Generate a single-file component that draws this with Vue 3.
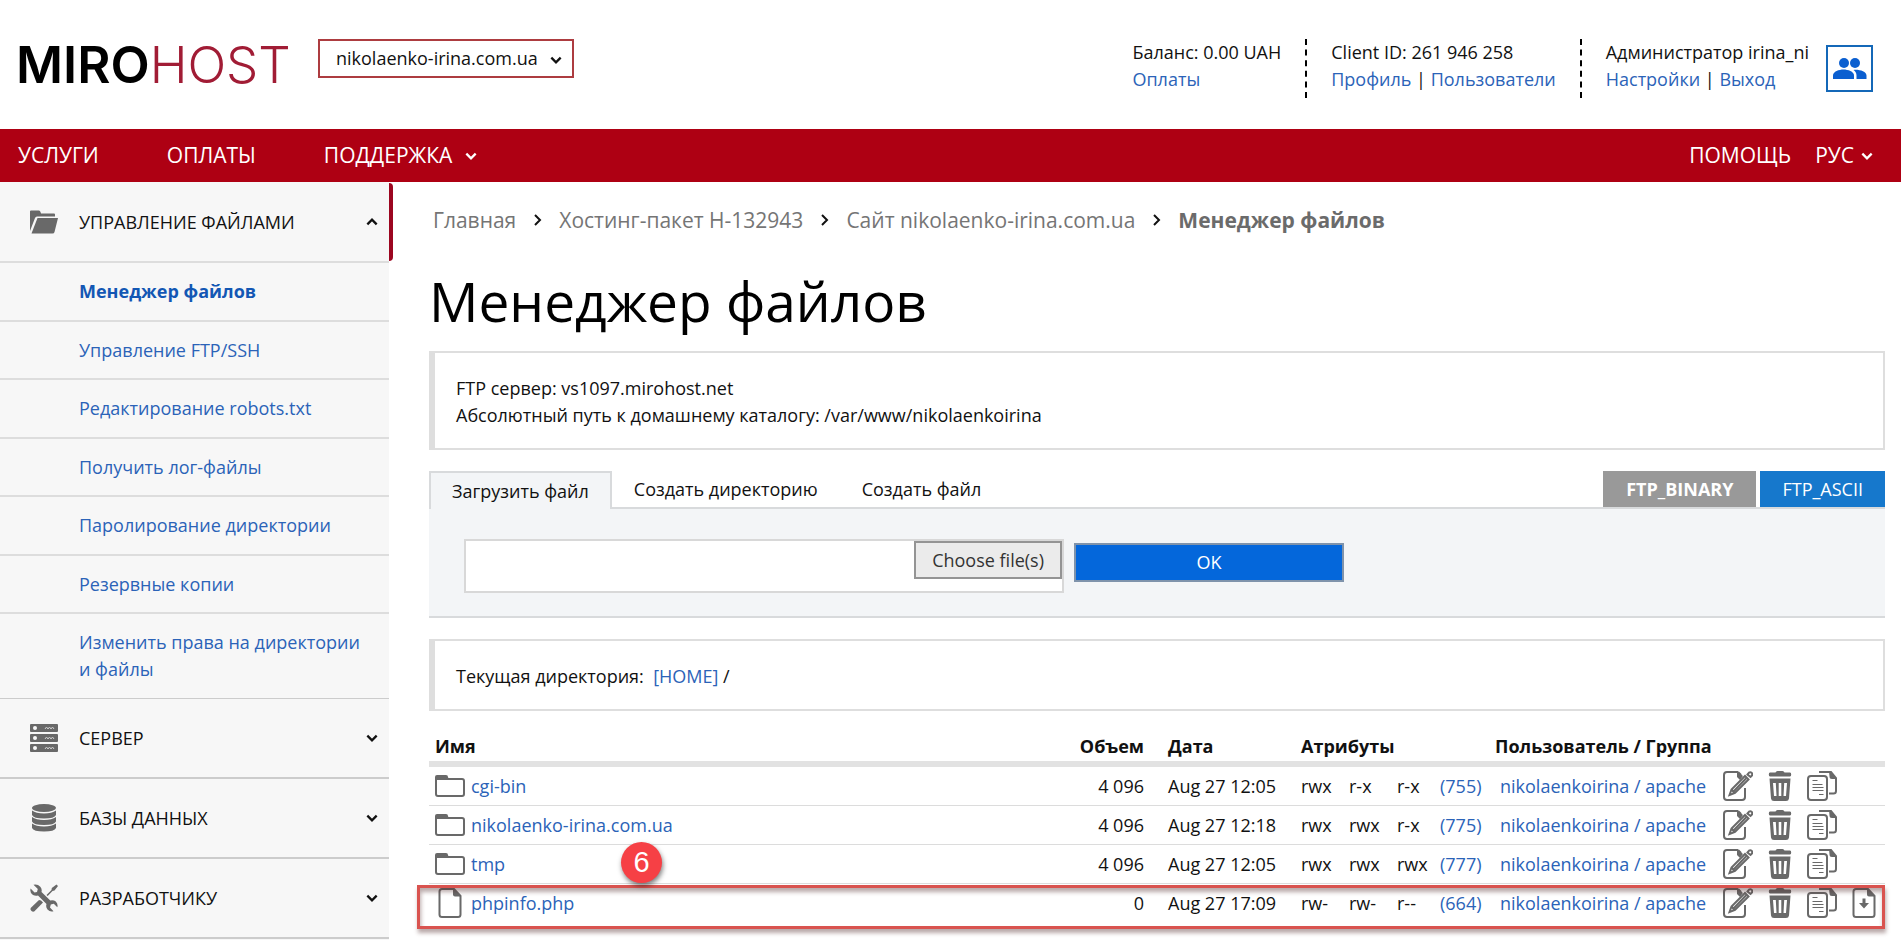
<script setup>
import { ref } from 'vue'

const site = ref('nikolaenko-irina.com.ua')
const filePath = ref('')
const activeTab = ref(0)
const tabs = ['Загрузить файл', 'Создать директорию', 'Создать файл']

const fileLinks = [
  'Менеджер файлов',
  'Управление FTP/SSH',
  'Редактирование robots.txt',
  'Получить лог-файлы',
  'Паролирование директории',
  'Резервные копии',
  'Изменить права на директории и файлы',
]

const sections = [
  { id: 'server', title: 'СЕРВЕР' },
  { id: 'db', title: 'БАЗЫ ДАННЫХ' },
  { id: 'dev', title: 'РАЗРАБОТЧИКУ' },
]

const crumbs = ['Главная', 'Хостинг-пакет H-132943', 'Сайт nikolaenko-irina.com.ua']

const rows = [
  { name: 'cgi-bin', dir: true, size: '4 096', date: 'Aug 27 12:05', perm: ['rwx', 'r-x', 'r-x'], mode: '(755)' },
  { name: 'nikolaenko-irina.com.ua', dir: true, size: '4 096', date: 'Aug 27 12:18', perm: ['rwx', 'rwx', 'r-x'], mode: '(775)' },
  { name: 'tmp', dir: true, size: '4 096', date: 'Aug 27 12:05', perm: ['rwx', 'rwx', 'rwx'], mode: '(777)' },
  { name: 'phpinfo.php', dir: false, size: '0', date: 'Aug 27 17:09', perm: ['rw-', 'rw-', 'r--'], mode: '(664)' },
]
</script>

<template>
  <div class="page">
    <header class="top">
      <a class="logo" href="#" aria-label="MIROHOST"><span class="miro">MIRO</span><span class="host">HOST</span></a>
      <div class="site">
        <select v-model="site" aria-label="Сайт">
          <option>nikolaenko-irina.com.ua</option>
        </select>
        <svg class="chev" viewBox="0 0 12 12"><path d="M2 4l4 4 4-4" /></svg>
      </div>
      <div class="account">
        <div class="cell">
          <div>Баланс: 0.00 UAH</div>
          <div><a href="#">Оплаты</a></div>
        </div>
        <div class="cell">
          <div>Client ID: 261 946 258</div>
          <div><a href="#">Профиль</a> | <a href="#">Пользователи</a></div>
        </div>
        <div class="cell">
          <div>Администратор irina_ni</div>
          <div><a href="#">Настройки</a> | <a href="#">Выход</a></div>
        </div>
        <button class="users" type="button" aria-label="Пользователи">
          <svg viewBox="0 0 34 22">
            <circle cx="11" cy="5" r="5" />
            <circle cx="22" cy="5" r="5" />
            <path d="M0 21v-3.500C0 13.500 6 11.500 10.500 11.500S21 13.500 21 17.500V21z" />
            <path d="M23.500 21v-3.500c0-2.500-1.200-4.300-3-5.500C26 11.300 33.500 13.500 33.500 17.500V21z" />
          </svg>
        </button>
      </div>
    </header>

    <nav class="nav">
      <a href="#">УСЛУГИ</a>
      <a href="#">ОПЛАТЫ</a>
      <a href="#" class="support">ПОДДЕРЖКА <svg class="chev" viewBox="0 0 12 12"><path d="M2 4l4 4 4-4" /></svg></a>
      <a href="#" class="help">ПОМОЩЬ</a>
      <a href="#" class="lang">РУС <svg class="chev" viewBox="0 0 12 12"><path d="M2 4l4 4 4-4" /></svg></a>
    </nav>

    <div class="body">
      <aside class="side">
        <button class="group open" type="button" aria-expanded="true">
          <svg class="gicon" viewBox="0 0 28 28">
            <path d="M0 23V3.500q0-1 1-1h8q1 0 1.500 1.500L11 5.500h13q1 0 1 1v2H7q-1.500 0-2 1.500z" />
            <path d="M7.500 10H28L24.500 24q-.4 1.500-2 1.500H1.500z" />
          </svg>
          <span>УПРАВЛЕНИЕ ФАЙЛАМИ</span>
          <svg class="chev" viewBox="0 0 12 12"><path d="M2 8l4-4 4 4" /></svg>
        </button>
        <ul class="sub">
          <li v-for="(l, i) in fileLinks" :key="l"><a href="#" :class="{ current: i === 0 }">{{ l }}</a></li>
        </ul>
        <button v-for="s in sections" :key="s.id" class="group" type="button" aria-expanded="false">
          <svg v-if="s.id === 'server'" class="gicon" viewBox="0 0 28 28">
            <g v-for="y in [0, 10, 20]" :key="y">
              <rect x="0" :y="y" width="28" height="8" rx="1" />
              <circle cx="5" :cy="y + 4" r="2" fill="#f7f7f7" />
              <path :d="`M15 ${y + 5}l1.500-2 1.500 2 1.500-2 1.500 2 1.500-2 1.500 2`" fill="none" stroke="#d0d0d0" />
            </g>
          </svg>
          <svg v-else-if="s.id === 'db'" class="gicon" viewBox="0 0 28 28">
            <ellipse cx="14" cy="4" rx="12" ry="4" />
            <path v-for="y in [0, 6.500, 13]" :key="y" :d="`M2 ${y + 6.500}q4 3 12 3t12-3v4.500q-1.500 3.500-12 3.500t-12-3.500z`" />
          </svg>
          <svg v-else class="gicon" viewBox="0 0 28 28">
            <path d="M3.500 .8L7.800 5 7 8 4.500 8.500 .6 4.500Q-.5 9 3 11q2.500 1.300 5 .5l8.500 8.500q-1 3 1 5.500 2.500 2.700 6 1.700L20 23.500l.8-3 3-.8 3.500 3.600q1-3.300-1.500-5.800-2.500-2-5.500-1L11.500 8q.8-3-1.200-5.200Q7.500-.2 3.500.8z" />
            <path d="M11 16.500l2 2L4.500 27.300q-1.500 1-3-.3-1.700-1.600-.6-3.200L9 16z" />
            <path d="M16.500 11l5-5 .3-2L26.500 .5 28 2l-3.500 4.500-2 .5-4.800 5z" />
          </svg>
          <span>{{ s.title }}</span>
          <svg class="chev" viewBox="0 0 12 12"><path d="M2 4l4 4 4-4" /></svg>
        </button>
      </aside>

      <main class="main">
        <div class="crumbs">
          <template v-for="c in crumbs" :key="c">
            <a href="#">{{ c }}</a>
            <svg viewBox="0 0 12 16"><path d="M3 3l5 5-5 5" /></svg>
          </template>
          <strong>Менеджер файлов</strong>
        </div>
        <h1>Менеджер файлов</h1>

        <section class="box">
          <div>FTP сервер: vs1097.mirohost.net</div>
          <div>Абсолютный путь к домашнему каталогу: /var/www/nikolaenkoirina</div>
        </section>

        <div class="tabs">
          <button v-for="(t, i) in tabs" :key="t" type="button" class="tab" :class="{ active: i === activeTab }" @click="activeTab = i">{{ t }}</button>
          <div class="modes">
            <button type="button" class="mode selected">FTP_BINARY</button>
            <button type="button" class="mode">FTP_ASCII</button>
          </div>
        </div>
        <form class="panel" @submit.prevent>
          <div class="file">
            <input v-model="filePath" type="text" aria-label="Файл" />
            <button type="button">Choose file(s)</button>
          </div>
          <button class="ok" type="submit">OK</button>
        </form>

        <section class="box dir">Текущая директория: &nbsp;<a href="#">[HOME]</a> /</section>

        <div class="listing">
          <table>
            <colgroup>
              <col />
              <col class="c-size" />
              <col class="c-date" />
              <col class="c-perm" />
              <col class="c-perm" />
              <col class="c-last" />
              <col class="c-mode" />
              <col class="c-user" />
              <col class="c-act" />
            </colgroup>
            <thead>
              <tr>
                <th class="name">Имя</th>
                <th class="size">Объем</th>
                <th>Дата</th>
                <th colspan="4">Атрибуты</th>
                <th>Пользователь / Группа</th>
                <th></th>
              </tr>
            </thead>
            <tbody>
              <tr v-for="r in rows" :key="r.name">
                <td class="name">
                  <a href="#">
                    <svg v-if="r.dir" class="ic" viewBox="0 0 30 30">
                      <path class="s" d="M1 9v14q0 2 2 2h24q2 0 2-2V10q0-2-2-2H1z" />
                      <path d="M0 9V6q0-2 2-2h9q2 0 2 2l1 3z" />
                    </svg>
                    <svg v-else class="ic" viewBox="0 0 30 30">
                      <path class="s" d="M19 1H7Q4.500 1 4.500 3.500v23Q4.500 29 7 29h16q2.500 0 2.500-2.500V8z" />
                      <path d="M18 0l8 8.500h-6q-2 0-2-2z" />
                    </svg>
                    {{ r.name }}
                  </a>
                </td>
                <td class="size">{{ r.size }}</td>
                <td>{{ r.date }}</td>
                <td v-for="(p, i) in r.perm" :key="i">{{ p }}</td>
                <td><a href="#">{{ r.mode }}</a></td>
                <td class="user"><a href="#">nikolaenkoirina</a><a href="#"> / apache</a></td>
                <td>
                  <div class="acts">
                    <a href="#" aria-label="Редактировать">
                      <svg class="ic" viewBox="0 0 30 30">
                        <path class="s" d="M15 1H4Q1 1 1 4v22q0 3 3 3h15q3 0 3-3v-9M15 1l3 3" />
                        <path d="M14 0l6 5-3 4-3-3z" />
                        <path class="s" d="M6.500 24l2-5.500L22 5l3.500 3.500L12 22zM9 19l2.500 3M10.500 20.500L23 7.500" />
                        <path class="s" d="M24.500 3.500l1.500-1.800q1.500-1 2.700.2t.2 2.600L27.500 6z" />
                      </svg>
                    </a>
                    <a href="#" aria-label="Удалить">
                      <svg class="ic" viewBox="0 0 30 30">
                        <path d="M5 1.500h5.500Q11 0 12.500 0h5q1.500 0 2 1.500H25q1.200 0 1.200 2T25 5.500H5Q3.800 5.500 3.800 3.500T5 1.500z" />
                        <path fill-rule="evenodd" d="M4.500 7.500h21L24 27.500q-.3 2.500-3 2.500H9q-2.700 0-3-2.500zM8 12l1 13h2.500L10.800 12zM13.700 12v13h2.600V12zM19.200 12l-.7 13H21l1-13z" />
                      </svg>
                    </a>
                    <a href="#" aria-label="Копировать">
                      <svg class="ic" viewBox="0 0 30 30">
                        <path class="s" d="M4 5h13q3 0 3 3v18q0 3-3 3H4q-3 0-3-3V8q0-3 3-3zM12 1h12l5 6v13q0 2.500-2.500 2.500H22" />
                        <path d="M22 0l8 8h-5q-2.500 0-2.500-2.500z" />
                        <path class="t" d="M5.500 9.500h5M5.500 13.500h10M5.500 16.500h11M5.500 19.500h11M12 23.500h4.500" />
                      </svg>
                    </a>
                    <a v-if="!r.dir" href="#" aria-label="Скачать">
                      <svg class="ic" viewBox="0 0 30 30">
                        <path class="s" d="M19 1H7Q4.500 1 4.500 3.500v23Q4.500 29 7 29h16q2.500 0 2.500-2.500V8z" />
                        <path d="M18 0l8 8.500h-6q-2 0-2-2zM13.500 10.500h3V15H20l-5 5.500L10 15h3.500z" />
                      </svg>
                    </a>
                  </div>
                </td>
              </tr>
            </tbody>
          </table>
          <div class="marker"></div>
          <div class="step">6</div>
        </div>
      </main>
    </div>
  </div>
</template>

<style>
body {
  margin: 0;
  background: #fff;
}
</style>

<style scoped>
* {
  box-sizing: border-box;
}
.page {
  min-height: 100vh;
  display: flex;
  flex-direction: column;
  font-family: "Open Sans", "Noto Sans", sans-serif;
  font-size: 18px;
  line-height: 27px;
  color: #111;
}
button,
select,
input {
  font: inherit;
  color: inherit;
  margin: 0;
  border-radius: 0;
}
a {
  color: #2b63b8;
  text-decoration: none;
}
.chev {
  width: 14px;
  height: 14px;
  flex: none;
}
.chev path,
.crumbs path {
  fill: none;
  stroke: currentColor;
  stroke-width: 2;
}

/* top bar */
.top {
  display: flex;
  align-items: flex-start;
  height: 129px;
  padding: 39px 28px 0 16px;
}
.logo {
  width: 302px;
  height: 52px;
  font-family: Inter, sans-serif;
  font-size: 51px;
  line-height: 52px;
  white-space: nowrap;
}
.miro {
  color: #000;
  font-weight: 600;
}
.host {
  color: #a11c35;
  font-weight: 300;
}
.site {
  position: relative;
}
.site select {
  width: 256px;
  height: 39px;
  padding: 0 34px 0 16px;
  border: 2px solid #ad3c40;
  background: #fff;
  appearance: none;
}
.site .chev {
  position: absolute;
  right: 11px;
  top: 14px;
  pointer-events: none;
}
.account {
  display: flex;
  margin-left: auto;
  white-space: nowrap;
}
.cell {
  height: 59px;
  padding: 0 24px;
  border-left: 2px dashed #000;
}
.cell:first-child {
  border-left: 0;
}
.cell:nth-child(3) {
  padding-right: 17px;
}
.users {
  width: 47px;
  height: 47px;
  margin-top: 6px;
  padding: 0;
  display: grid;
  place-items: center;
  border: 2px solid #1468b8;
  background: #fff;
}
.users svg {
  width: 34px;
  height: 22px;
  fill: #0b5fd0;
}

/* main navigation */
.nav {
  display: flex;
  align-items: center;
  height: 53px;
  padding: 0 27px 0 18px;
  background: #ae0013;
  font-size: 21px;
}
.nav a {
  display: flex;
  align-items: center;
  margin-right: 68px;
  color: #fff;
}
.nav .chev {
  margin-left: 12px;
}
.nav .help {
  margin: 0 24px 0 auto;
}
.nav .lang {
  margin: 0;
}
.nav .lang .chev {
  margin-left: 6px;
}

.body {
  display: flex;
  flex: 1;
}

/* sidebar */
.side {
  flex: none;
  width: 389px;
  padding-top: 1px;
  background: #f7f7f7;
}
.group {
  position: relative;
  display: flex;
  align-items: center;
  width: 100%;
  height: 80px;
  padding: 0 10px 0 30px;
  border: 0;
  border-bottom: 2px solid #ccc;
  background: none;
  text-align: left;
}
.group.open {
  height: 80px;
  border-bottom-color: #ddd;
}
.group.open::after {
  content: "";
  position: absolute;
  left: 100%;
  top: 0;
  width: 4px;
  height: 78px;
  border-radius: 0 4px 4px 0;
  background: #9c0620;
}
.group span {
  flex: 1;
}
.gicon {
  width: 28px;
  height: 28px;
  margin-right: 21px;
  fill: #696969;
}
.sub {
  margin: 0;
  padding: 0;
  list-style: none;
}
.sub li {
  padding: 15px 20px 15px 79px;
  border-bottom: 2px solid #ddd;
}
.sub li:nth-child(even) {
  padding-bottom: 14px;
}
.sub li:last-child {
  border-bottom: 1px solid #ccc;
}
.sub .current {
  font-weight: 700;
  color: #1357b4;
}

/* content */
.main {
  flex: 1;
  min-width: 0;
  padding: 24px 16px 0 40px;
}
.crumbs {
  display: flex;
  align-items: center;
  height: 28px;
  padding-left: 4px;
  font-size: 21px;
  line-height: 28px;
  color: #6b6b6b;
}
.crumbs a {
  color: #757575;
}
.crumbs svg {
  width: 12px;
  height: 16px;
  margin: 0 15px 0 16px;
  color: #111;
}
h1 {
  margin: 30px 0 13px;
  font-size: 55px;
  line-height: 74px;
  font-weight: 400;
  color: #000;
}
.box {
  padding: 22px 21px 19px;
  border: 2px solid #dedede;
  border-left-width: 6px;
}
.dir {
  margin-top: 21px;
}
.tabs {
  display: flex;
  align-items: flex-start;
  height: 38px;
  margin-top: 21px;
  border-bottom: 2px solid #d8dadc;
}
.tab {
  height: 36px;
  padding: 0 22px;
  border: 0;
  background: none;
}
.tab.active {
  height: 38px;
  padding: 0 21px;
  border: 2px solid #d8dadc;
  border-bottom: 0;
  background: #f3f5f7;
}
.modes {
  display: flex;
  gap: 4px;
  margin-left: auto;
}
.mode {
  height: 36px;
  padding: 0 22px;
  border: 0;
  background: #1678cc;
  color: #fff;
}
.mode.selected {
  padding: 0 23px;
  background: #999;
  font-weight: 700;
}
.panel {
  display: flex;
  gap: 10px;
  padding: 30px 35px 23px;
  border-bottom: 2px solid #d8dadc;
  background: #f3f5f7;
}
.file {
  display: flex;
  align-items: flex-start;
  width: 600px;
  height: 54px;
  border: 2px solid #d8d8d8;
  background: #fff;
}
.file input {
  flex: 1;
  min-width: 0;
  height: 50px;
  padding: 0 12px;
  border: 0;
  background: none;
}
.file button {
  height: 38px;
  padding: 0 16px;
  border: 2px solid #949494;
  background: #ebebeb;
  color: #333;
}
.ok {
  width: 270px;
  height: 39px;
  margin-top: 4px;
  border: 2px solid #7f93ab;
  background: #0467db;
  color: #fff;
}

/* file table */
.listing {
  position: relative;
  margin-top: 22px;
}
table {
  width: 100%;
  table-layout: fixed;
  border-collapse: separate;
  border-spacing: 0;
  white-space: nowrap;
}
.c-size {
  width: 128px;
}
.c-date {
  width: 133px;
}
.c-perm {
  width: 48px;
}
.c-last {
  width: 43px;
}
.c-mode {
  width: 55px;
}
.c-user {
  width: 228px;
}
.c-act {
  width: 162px;
}
th {
  height: 34px;
  padding: 0 0 1px;
  border-bottom: 6px solid #e2e2e2;
  text-align: left;
  font-weight: 700;
}
td {
  height: 39px;
  padding: 0;
  border-bottom: 1px solid #dcdcdc;
}
tbody tr:last-child td {
  border-bottom-color: transparent;
}
.name {
  padding-left: 6px;
}
.name a {
  display: flex;
  align-items: center;
  gap: 6px;
}
.size {
  padding-right: 24px;
  text-align: right;
}
.user {
  padding-left: 5px;
}
.user a {
  white-space: pre;
}
.acts {
  display: flex;
  gap: 12px;
}
.ic {
  display: block;
  width: 30px;
  height: 30px;
  fill: #696969;
}
.ic .s {
  fill: none;
  stroke: #696969;
  stroke-width: 2;
}
.ic .t {
  fill: none;
  stroke: #696969;
  stroke-width: 1;
}
.marker {
  position: absolute;
  left: -12px;
  right: 0;
  bottom: -6px;
  height: 44px;
  border: 3px solid #d9534f;
  box-shadow: 1px 4px 4px rgba(80, 40, 40, 0.4), inset 1px 4px 4px rgba(80, 40, 40, 0.4);
  pointer-events: none;
}
.step {
  position: absolute;
  left: 192px;
  bottom: 40px;
  width: 41px;
  height: 41px;
  border-radius: 50%;
  background: #f64045;
  box-shadow: 1px 3px 5px rgba(0, 0, 0, 0.5);
  color: #fff;
  font-family: "Liberation Sans", sans-serif;
  font-size: 29px;
  line-height: 41px;
  text-align: center;
}
</style>
